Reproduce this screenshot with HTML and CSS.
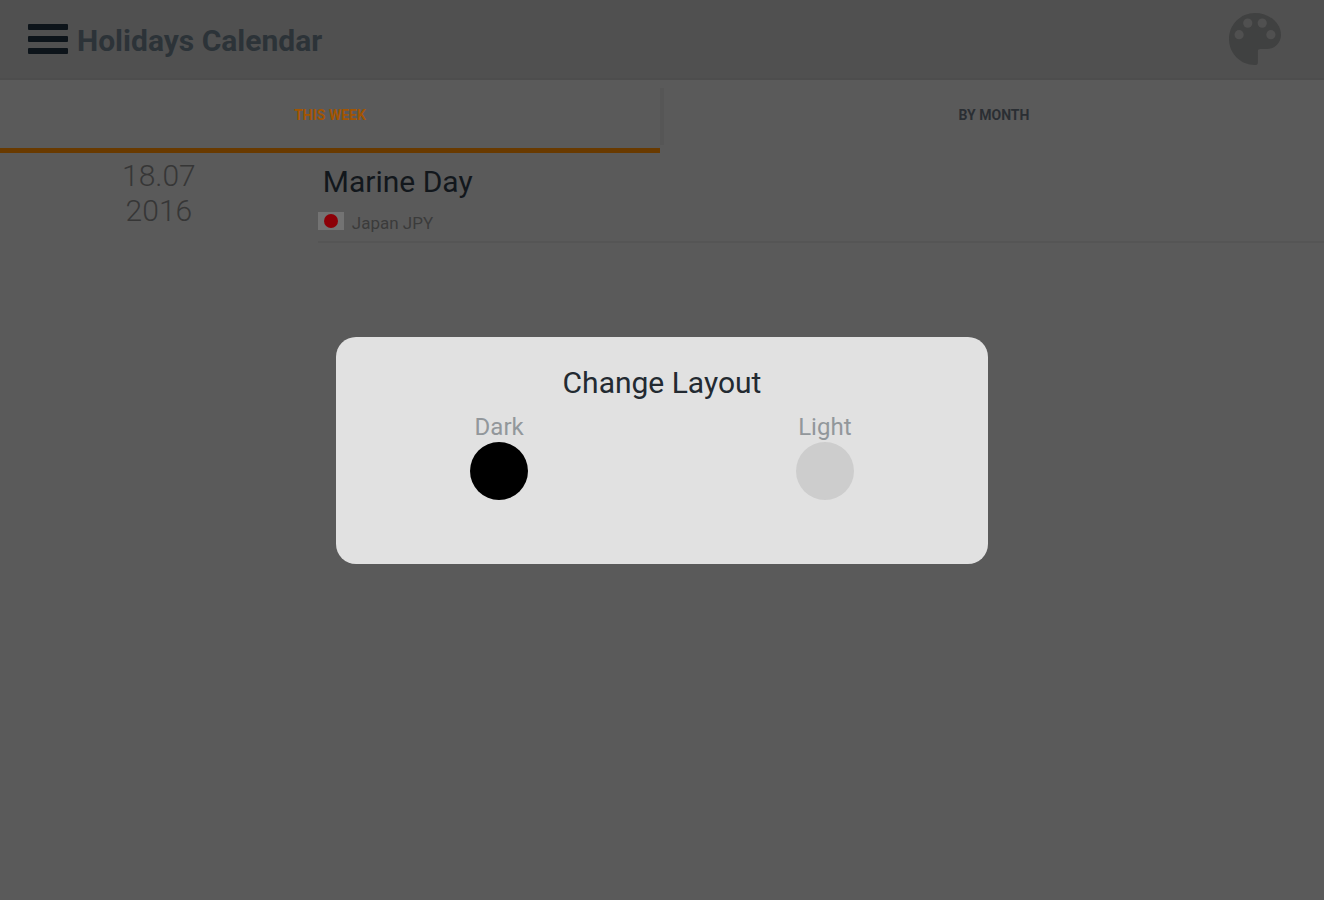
FILE: index.html
```html
<!DOCTYPE html>
<html lang="en">
<head>
    <meta charset="UTF-8">
    <meta name="viewport" content="width=device-width, initial-scale=1.0">
    <title>Holidays Calendar</title>
    <link rel="stylesheet" href="styles.css">
</head>
<body>
    <header class="topbar">
        <button class="icon-btn" type="button" aria-label="Menu">
            <svg width="40" height="30" viewBox="0 0 40 30" fill="#0d141a">
                <rect y="0" width="40" height="6" rx="1"/>
                <rect y="12" width="40" height="6" rx="1"/>
                <rect y="24" width="40" height="6" rx="1"/>
            </svg>
        </button>
        <h1 class="title">Holidays Calendar</h1>
        <button class="icon-btn palette" type="button" aria-label="Change layout">
            <svg width="52" height="52" viewBox="3 3 18 18">
                <path fill="#404141" d="M12 3c-5 0-9 4-9 9s4 9 9 9c.6 0 1-.3 1-.9V16.300c0-.5.3-.8.8-.8H16c2.800 0 5-2.200 5-5C21 6.500 17 3 12 3z"/>
                <g fill="#505050">
                    <circle cx="6.500" cy="10.500" r="1.600"/>
                    <circle cx="9.500" cy="6.500" r="1.600"/>
                    <circle cx="14.500" cy="6.500" r="1.600"/>
                    <circle cx="17.500" cy="10.500" r="1.600"/>
                </g>
            </svg>
        </button>
    </header>

    <nav class="tabs">
        <button class="tab active" type="button">THIS WEEK</button>
        <div class="divider"></div>
        <button class="tab" type="button">BY MONTH</button>
    </nav>

    <main class="holiday">
        <div class="date">18.07<br>2016</div>
        <div class="details">
            <h2 class="name">Marine Day</h2>
            <div class="country">
                <svg width="26" height="18" viewBox="0 0 26 18">
                    <rect width="26" height="18" fill="#737373"/>
                    <circle cx="13" cy="9" r="7" fill="#8c0007"/>
                </svg>
                <span>Japan JPY</span>
            </div>
        </div>
    </main>

    <div class="overlay">
        <div class="dialog" role="dialog" aria-labelledby="dialog-title">
            <h2 class="dialog-title" id="dialog-title">Change Layout</h2>
            <div class="options">
                <label class="option">Dark
                    <input class="swatch dark" type="radio" name="layout" value="dark">
                </label>
                <label class="option">Light
                    <input class="swatch light" type="radio" name="layout" value="light">
                </label>
            </div>
        </div>
    </div>
</body>
</html>
```
FILE: styles.css
```css
* {
    box-sizing: border-box;
}
body {
    margin: 0;
    min-height: 100vh;
    background-color: #5a5a5a;
    font-family: Roboto, sans-serif;
}
h1, h2 {
    margin: 0;
    font-weight: normal;
}
button {
    font-family: inherit;
    border: none;
    background: none;
    cursor: pointer;
}
svg {
    display: block;
}
.topbar {
    display: flex;
    align-items: center;
    gap: 9px;
    height: 80px;
    padding: 0 43px 0 28px;
    background-color: #505050;
    border-bottom: 2px solid #4d4d4d;
}
.icon-btn {
    padding: 0;
}
.title {
    padding-top: 4px;
    font-size: 30px;
    line-height: 36px;
    font-weight: bold;
    color: #2c3338;
}
.palette {
    margin-left: auto;
}
.tabs {
    display: flex;
}
.divider {
    width: 4px;
    margin: 8px 0;
    background-color: #565656;
}
.tab {
    flex: 1;
    height: 73px;
    padding: 2px 0 0;
    font-size: 14px;
    font-weight: bold;
    color: #2a2e33;
    border-bottom: 5px solid transparent;
}
.tab.active {
    color: #a35500;
    border-bottom-color: #693a00;
}
.holiday {
    display: grid;
    grid-template-columns: 24% 1fr;
}
.date {
    padding-top: 5px;
    font-size: 30px;
    line-height: 35px;
    font-weight: 300;
    text-align: center;
    color: #363636;
}
.details {
    padding-top: 11px;
    border-bottom: 2px solid #555;
}
.name {
    padding-left: 5px;
    font-size: 30px;
    line-height: 36px;
    color: #12171c;
}
.country {
    display: flex;
    gap: 8px;
    padding: 12px 0 7px;
    font-size: 17px;
    line-height: 22px;
    color: #3b3b3b;
}
.overlay {
    position: fixed;
    inset: 0;
    display: flex;
    align-items: center;
    justify-content: center;
}
.dialog {
    width: 49.2%;
    padding: 28px 0 64px;
    border-radius: 20px;
    background-color: #e1e1e1;
    text-align: center;
}
.dialog-title {
    font-size: 30px;
    line-height: 36px;
    color: #232a31;
}
.options {
    display: flex;
    margin-top: 12px;
}
.option {
    flex: 1;
    display: flex;
    flex-direction: column;
    align-items: center;
    gap: 1px;
    font-size: 24px;
    line-height: 28px;
    color: #92979b;
}
.swatch {
    appearance: none;
    width: 58px;
    height: 58px;
    margin: 0;
    border-radius: 50%;
    cursor: pointer;
}
.swatch.dark {
    background-color: #000;
}
.swatch.light {
    background-color: #cdcdcd;
}
```
